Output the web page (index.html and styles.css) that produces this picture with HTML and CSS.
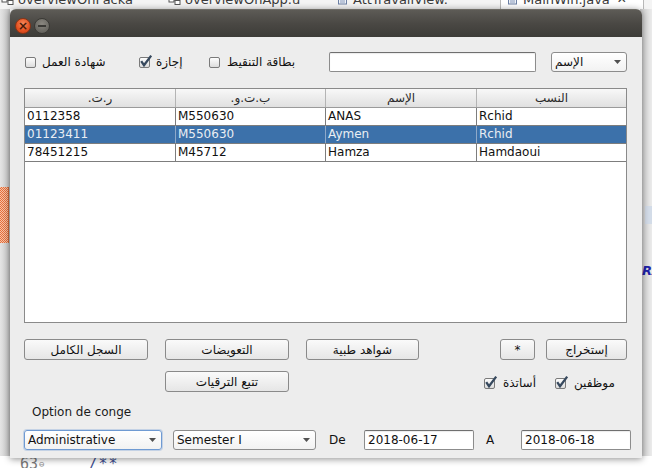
FILE: index.html
```html
<!DOCTYPE html>
<html>
<head>
<meta charset="utf-8">
<link rel="stylesheet" href="styles.css">
</head>
<body>
<div class="desktop">
  <div class="ide-tabs">
    <div class="tab w1"><svg class="ico" width="13" height="9" viewBox="0 0 13 9"><rect x="1" y="-3" width="5" height="5" fill="#fff" stroke="#555"/><rect x="7" y="0.5" width="5" height="4" fill="#fff" stroke="#555"/><path d="M6 0h1" stroke="#555"/></svg><span>overviewOnPacka</span></div>
    <div class="tab w2"><svg class="ico" width="13" height="9" viewBox="0 0 13 9"><rect x="1" y="-3" width="5" height="5" fill="#fff" stroke="#555"/><rect x="7" y="0.5" width="5" height="4" fill="#fff" stroke="#555"/><path d="M6 0h1" stroke="#555"/></svg><span>overviewOnApp.u</span></div>
    <div class="tab w3"><svg class="ico" width="13" height="9" viewBox="0 0 13 9"><rect x="2.5" y="-4" width="8" height="8" fill="#eef2f8" stroke="#6b7fa3"/><path d="M4 0h5M4 2h5" stroke="#8899bb"/></svg><span>AttTravailView.</span></div>
    <div class="tab w4 active"><svg class="ico" width="13" height="9" viewBox="0 0 13 9"><rect x="2.5" y="-4" width="8" height="8" fill="#eef2f8" stroke="#6b7fa3"/><path d="M4 0h5M4 2h5" stroke="#8899bb"/></svg><span>MainWin.java</span><span class="x">✕</span></div>
  </div>
  <div class="ide-left"><div class="marker"></div></div>
  <div class="ide-right"><div class="hl"></div><span class="r">RA</span></div>
  <div class="ide-bottom"><span class="ln">63</span><span class="fold">⊖</span><span class="cm">/**</span></div>

  <div class="window">
    <div class="titlebar">
      <span class="wbtn close">×</span>
      <span class="wbtn min"><i></i></span>
    </div>
    <div class="content">
      <div class="row1">
        <label class="chk c1"><span class="cb"></span><span>شهادة العمل</span></label>
        <label class="chk c2"><span class="cb on"><svg width="14" height="14" viewBox="0 0 14 14"><path d="M2.2 7.2L5 11.2L12.2 1.6" fill="none" stroke="#37495e" stroke-width="2.3"/></svg></span><span>إجازة</span></label>
        <label class="chk c3"><span class="cb"></span><span>بطاقة التنقيط</span></label>
        <div class="field search"></div>
        <div class="combo name"><span>الإسم</span><svg class="arr" width="7" height="4" viewBox="0 0 7 4"><path d="M0 0h7L3.5 4z" fill="#505050"/></svg></div>
      </div>

      <div class="table">
        <div class="thead"><div dir="auto">ر.ت.</div><div dir="auto">ب.ت.و.</div><div dir="auto">الإسم</div><div dir="auto">النسب</div></div>
        <div class="tr"><div>0112358</div><div>M550630</div><div>ANAS</div><div>Rchid</div></div>
        <div class="tr sel"><div>01123411</div><div>M550630</div><div>Aymen</div><div>Rchid</div></div>
        <div class="tr"><div>78451215</div><div>M45712</div><div>Hamza</div><div>Hamdaoui</div></div>
      </div>

      <div class="row-btns">
        <div class="btn b124">السجل الكامل</div>
        <div class="btn b124">التعويضات</div>
        <div class="btn b113">شواهد طبية</div>
        <div class="btn star">*</div>
        <div class="btn extract">إستخراج</div>
      </div>

      <div class="row2">
        <div class="btn b124 track">تتبع الترقيات</div>
        <div class="checks">
          <label class="chk"><span class="cb on"><svg width="14" height="14" viewBox="0 0 14 14"><path d="M2.2 7.2L5 11.2L12.2 1.6" fill="none" stroke="#37495e" stroke-width="2.3"/></svg></span><span>أساتذة</span></label>
          <label class="chk"><span class="cb on"><svg width="14" height="14" viewBox="0 0 14 14"><path d="M2.2 7.2L5 11.2L12.2 1.6" fill="none" stroke="#37495e" stroke-width="2.3"/></svg></span><span>موظفين</span></label>
        </div>
      </div>

      <div class="opt-label">Option de conge</div>

      <div class="row3">
        <div class="combo admin focus"><span>Administrative</span><svg class="arr" width="7" height="4" viewBox="0 0 7 4"><path d="M0 0h7L3.5 4z" fill="#505050"/></svg></div>
        <div class="combo sem"><span>Semester I</span><svg class="arr" width="7" height="4" viewBox="0 0 7 4"><path d="M0 0h7L3.5 4z" fill="#505050"/></svg></div>
        <span class="lbl">De</span>
        <div class="field date">2018-06-17</div>
        <span class="lbl">A</span>
        <div class="field date">2018-06-18</div>
      </div>
    </div>
  </div>
</div>
</body>
</html>
```

FILE: styles.css
```css
html, body {
  margin: 0;
  padding: 0;
  background: #ffffff;
}
.desktop {
  position: relative;
  width: 652px;
  height: 468px;
  overflow: hidden;
  background: #ffffff;
  font-family: "DejaVu Sans", sans-serif;
}

/* ---------- IDE background ---------- */
.ide-tabs {
  position: absolute;
  left: 0;
  top: 0;
  width: 652px;
  height: 9px;
  overflow: hidden;
  display: flex;
  background: #f4f4f4;
  font-size: 13px;
  color: #3a3a3a;
}
.tab {
  display: flex;
  align-items: flex-start;
  height: 9px;
  box-sizing: border-box;
  padding-left: 1px;
}
.tab span {
  margin-top: -8px;
  line-height: 15px;
  white-space: nowrap;
  margin-left: 4px;
}
.tab .ico { margin-top: 0; }
.w1 { width: 167px; }
.w2 { width: 168px; }
.w3 { width: 165px; }
.w4 {
  width: 144px;
  background: #ffffff;
  border-left: 1px solid #b8b8b8;
  border-right: 1px solid #b8b8b8;
  padding-left: 5px;
}
.w4 .x { margin-left: 7px; font-size: 12px; }

.ide-left {
  position: absolute;
  left: 0;
  top: 9px;
  width: 10px;
  height: 459px;
  background: linear-gradient(to right, #e4e4e4, #cfcfcf 70%, #bdbdbd);
}
.ide-left .marker {
  margin-top: 178px;
  width: 9px;
  height: 56px;
  box-sizing: border-box;
  border-right: 1px solid #d0683a;
  background: repeating-conic-gradient(#e66f3c 0 25%, #f6c3a8 0 50%) 0 0 / 2px 2px;
}
.ide-right {
  position: absolute;
  left: 640px;
  top: 9px;
  width: 12px;
  height: 459px;
  background: linear-gradient(to right, #c9c9c9, #d9d9d9 40%, #ebebeb);
}
.ide-right .hl {
  margin-top: 197px;
  height: 18px;
  margin-left: 5px;
  background: #d3dce8;
}
.ide-right .r {
  position: absolute;
  left: 2px;
  top: 254px;
  font: italic bold 13px "DejaVu Sans", sans-serif;
  color: #1e22a8;
}
.ide-bottom {
  position: absolute;
  left: 0;
  top: 456px;
  width: 652px;
  height: 12px;
  display: flex;
  align-items: flex-start;
  font: 15px "DejaVu Sans Mono", monospace;
  line-height: 17px;
  background: #ffffff;
}
.ide-bottom .ln { margin-left: 20px; color: #7a7a7a; }
.ide-bottom .fold { font-size: 9px; color: #8a8a8a; margin-left: 1px; line-height: 17px; }
.ide-bottom .cm { margin-left: 44px; color: #3f4f8f; letter-spacing: 1px; }

/* ---------- Window ---------- */
.window {
  position: absolute;
  left: 10px;
  top: 9px;
  width: 632px;
  height: 449px;
  background: #ededed;
  border-radius: 6px 6px 0 0;
  box-shadow: 0 1px 7px rgba(0, 0, 0, 0.45);
  overflow: hidden;
  font-size: 12px;
  color: #111;
}
.titlebar {
  height: 28px;
  box-sizing: border-box;
  padding: 8px 0 0 5px;
  display: flex;
  gap: 3px;
  background: linear-gradient(#5d5b56, #4a4844 50%, #3d3c38);
  border-top: 1px solid #6e6c66;
}
.wbtn {
  width: 16px;
  height: 16px;
  box-sizing: border-box;
  border-radius: 50%;
  display: flex;
  align-items: center;
  justify-content: center;
}
.wbtn.close {
  background: radial-gradient(circle at 50% 35%, #f78a5d, #e4501f 60%, #c7401a);
  border: 1px solid #8a3415;
  color: #4a1a08;
  font-size: 12px;
  line-height: 12px;
  font-weight: bold;
}
.wbtn.min {
  background: radial-gradient(circle at 50% 35%, #8a8780, #6a6862 65%, #5a5852);
  border: 1px solid #3a3935;
}
.wbtn.min i {
  display: block;
  width: 8px;
  height: 2px;
  background: #3a3935;
}

.content {
  padding: 15px 15px 0 14px;
}

.row1 {
  display: flex;
  align-items: center;
  height: 20px;
}
.chk {
  display: flex;
  align-items: center;
  gap: 6px;
  white-space: nowrap;
}
.c1 { width: 114px; margin-left: 1px; }
.c2 { width: 70px; }
.c3 { width: 100px; gap: 7px; }
.cb {
  position: relative;
  width: 11px;
  height: 11px;
  box-sizing: border-box;
  border: 1px solid #7a7a7a;
  border-radius: 2px;
  background: linear-gradient(#fdfdfd, #dcdcdc);
  flex: none;
}
.cb svg {
  position: absolute;
  left: -1px;
  top: -4px;
}

.field {
  box-sizing: border-box;
  height: 20px;
  background: #ffffff;
  border: 1px solid #8c8c8c;
  border-top-color: #6f6f6f;
  border-radius: 2px;
  box-shadow: inset 0 1px 1px rgba(0, 0, 0, 0.08);
  flex: none;
}
.field.search {
  margin-left: auto;
  width: 207px;
}
.combo {
  box-sizing: border-box;
  height: 20px;
  border: 1px solid #8c8c8c;
  border-radius: 3px;
  background: linear-gradient(#ffffff, #f2f2f2);
  display: flex;
  align-items: center;
  padding-left: 3px;
  flex: none;
}
.combo .arr { margin-left: auto; margin-right: 5px; }
.combo.name {
  width: 76px;
  margin-left: 15px;
}

/* ---------- Table ---------- */
.table {
  margin-top: 16px;
  height: 235px;
  box-sizing: border-box;
  border: 1px solid #8a8a8a;
  background: #ffffff;
}
.thead, .tr {
  display: grid;
  grid-template-columns: 151px 150px 151px 1fr;
}
.thead {
  height: 19px;
  box-sizing: border-box;
  border-bottom: 1px solid #9a9a9a;
  background: linear-gradient(#f8f8f8, #e0e0e0);
  color: #2a2a2a;
}
.thead div {
  text-align: center;
  line-height: 18px;
  border-right: 1px solid #b4b4b4;
}
.thead div:last-child { border-right: none; }
.tr {
  height: 18px;
  box-sizing: border-box;
  border-bottom: 1px solid #7d7d7d;
}
.tr div {
  line-height: 17px;
  padding-left: 2px;
  border-right: 1px solid #7d7d7d;
  white-space: nowrap;
  overflow: hidden;
}
.tr div:last-child { border-right: none; }
.tr.sel {
  background: #3c71aa;
  color: #eaeef3;
}
.tr.sel div { border-right-color: #8fa9c9; }
.tr.sel div:last-child { border-right: none; }

/* ---------- Buttons ---------- */
.btn {
  box-sizing: border-box;
  height: 21px;
  border: 1px solid #8a8a8a;
  border-radius: 3px;
  background: linear-gradient(#fafafa, #e6e6e6);
  display: flex;
  align-items: center;
  justify-content: center;
  flex: none;
  white-space: nowrap;
  color: #111;
}
.row-btns {
  margin-top: 16px;
  display: flex;
  gap: 17px;
}
.b124 { width: 124px; }
.b113 { width: 113px; }
.btn.star { width: 35px; margin-left: auto; }
.btn.extract { width: 81px; margin-left: -6px; }

.row2 {
  margin-top: 11px;
  display: flex;
  align-items: center;
  height: 21px;
}
.btn.track { margin-left: 141px; }
.checks {
  margin-left: auto;
  margin-right: 12px;
  display: flex;
  gap: 19px;
  padding-top: 3px;
}
.checks .chk { gap: 8px; }

.opt-label {
  margin-top: 12px;
  margin-left: 8px;
  line-height: 16px;
  color: #1a1a1a;
}

.row3 {
  margin-top: 9px;
  display: flex;
  align-items: center;
  height: 21px;
}
.combo.admin {
  width: 138px;
  border-color: #6f9ad2;
  box-shadow: 0 0 0 1px rgba(120, 160, 215, 0.35);
}
.combo.sem {
  width: 143px;
  margin-left: 11px;
}
.lbl {
  width: 37px;
  flex: none;
  padding-left: 2px;
  box-sizing: border-box;
}
.combo.sem + .lbl { margin-left: 11px; }
.field.date {
  width: 110px;
  padding-left: 3px;
  line-height: 18px;
  color: #111;
}
.field.date + .lbl { margin-left: 10px; }
```
